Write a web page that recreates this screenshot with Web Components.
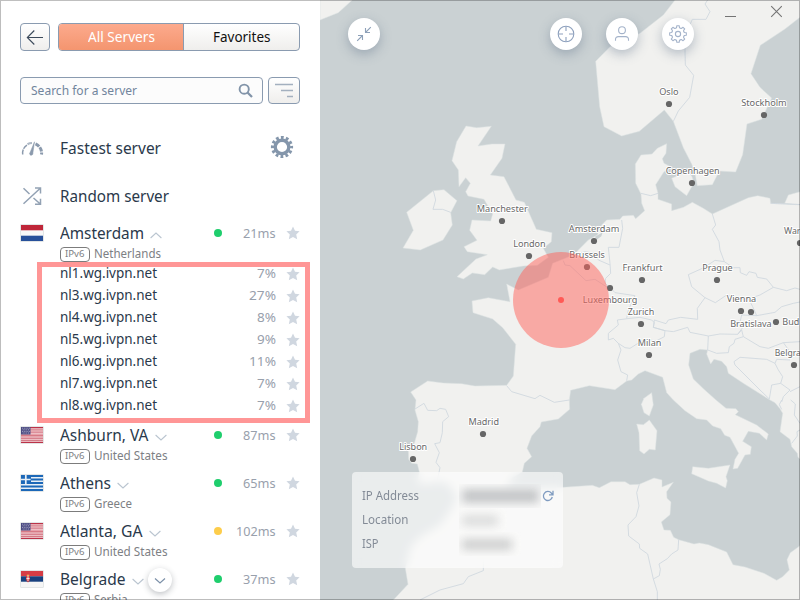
<!DOCTYPE html>
<html lang="en">
<head>
<meta charset="utf-8">
<title>IVPN servers</title>
<style>
html,body{margin:0;padding:0}
body{width:800px;height:600px;overflow:hidden;background:#fff;font-family:"Noto Sans","Open Sans",sans-serif;color:#2a394b}
</style>
</head>
<body>
<vpn-window></vpn-window>
<script>
class Base extends HTMLElement{
  connectedCallback(){
    if(this.shadowRoot)return;
    this.attachShadow({mode:'open'}).innerHTML=this.render();
    this.ready&&this.ready();
  }
}

/* Text run condensed or widened to a given width */
class FitText extends Base{
  render(){return `<style>:host{display:inline-block;white-space:nowrap;flex:none;width:${this.getAttribute('w')}px}
    span{display:inline-block;transform-origin:0 50%}</style><span><slot></slot></span>`}
  ready(){
    const s=this.shadowRoot.querySelector('span'),n=s.getBoundingClientRect().width;
    if(n)s.style.transform=`scaleX(${this.getAttribute('w')/n})`;
  }
}

class FavStar extends Base{
  render(){return `<style>:host{display:block;width:14px;height:14px}svg{display:block}</style>
  <svg width="14" height="14" viewBox="0 0 14 14"><path fill="#d0d7e0" d="M7 .4 9 4.700 13.600 5.200 10.200 8.400 11.200 13.200 7 10.900 2.800 13.200 3.800 8.400 .4 5.200 5 4.700Z"/></svg>`}
}

const US=`<rect width="22" height="16" fill="#e7a2ab"/>
  <path d="M0 .6H22M0 15.4H22" stroke="#bb3349" stroke-width="1.2"/>
  <path d="M9 2.9H22M9 5.1H22M0 8.9H22M0 11.2H22M0 13.3H22" stroke="#c44f61" stroke-width=".8"/>
  <path d="M9 1.9H22M9 4H22M9 6.2H22M0 10H22M0 12.3H22M0 14.3H22" stroke="#f6dfe1" stroke-width=".7"/>
  <rect width="9.5" height="7.5" fill="#4b4b82"/>
  <path d="M1 1.2H9M1.7 2.8H9M1 4.4H9M1.7 6H9" stroke="#c3c2d8" stroke-width=".8" stroke-dasharray=".9 .9"/>`;
const FLAGS={
  nl:`<rect width="22" height="16" fill="#f8f8f8"/><rect width="22" height="5.3" fill="#bf2639"/><rect y="10.7" width="22" height="5.3" fill="#27509a"/>`,
  us:US,
  gr:`<rect width="22" height="16" fill="#1c68b8"/><path d="M10 2.7H22M10 6.2H22M0 9.8H22M0 13.3H22" stroke="#e8eff6" stroke-width="1.6"/><rect width="9.6" height="9" fill="#1c68b8"/><path d="M4.8 0V9M0 4.5H9.6" stroke="#e8eff6" stroke-width="1.7"/>`,
  rs:`<rect width="22" height="16" fill="#f5f5f5"/><rect width="22" height="5.3" fill="#d63c45"/><rect y="5.3" width="22" height="5.4" fill="#18407e"/><path d="M5 5H9V9L7 11.500 5 9Z" fill="#cf3a43"/><path d="M7 5V10M5.500 7.500H8.500" stroke="#f4e4e0" stroke-width="1"/><path d="M5.800 3.700H8.200V5H5.800Z" fill="#e9b95b"/>`
};
class FlagIcon extends Base{
  render(){return `<style>:host{display:block;width:22px;height:16px;border:1px solid #e3e6e6;border-radius:1px}svg{display:block}</style>
  <svg width="22" height="16">${FLAGS[this.getAttribute('code')]}</svg>`}
}

class ServerRow extends Base{
  render(){
    const a=n=>this.getAttribute(n);
    return `<style>
    :host{display:block;height:48px}
    :host([open]){height:41px}
    .a{display:grid;grid-template-columns:40px 1fr 26px 54px 24px;height:24px;align-items:center}
    .city{display:flex;align-items:center;font-size:15.900px;line-height:24px}
    .city svg{margin:4px 0 0 6px}
    .dot{width:8px;height:8px;border-radius:50%;background:${a('dot')||'#1fce6d'};justify-self:end}
    .ms{justify-self:end;font-size:13px;line-height:24px;color:#98a0ac;display:flex;margin-right:.5px}
    fav-star{justify-self:end}
    .b{display:flex;align-items:center;height:18px;margin-left:40px;gap:3.500px;font-size:12.200px;color:#7d8084;line-height:18px}
    .v6{box-sizing:border-box;width:30px;height:15px;border:1px solid #7c7c7c;border-radius:4px;display:flex;justify-content:center;align-items:center;font-size:9.300px;line-height:12px}
    </style>
    <div class="a"><flag-icon code="${a('flag')}"></flag-icon>
      <div class="city"><fit-text w="${a('cw')}">${a('city')}</fit-text><svg width="12" height="7" fill="none" stroke="#bac5d0" stroke-width="1.1"><path d="${this.hasAttribute('open')?'M.6 6 6 1 11.400 6':'M.6 1 6 6 11.400 1'}"/></svg></div>
      <i class="dot"></i><div class="ms"><fit-text w="${a('mw')}">${a('ms')}</fit-text></div><fav-star></fav-star></div>
    <div class="b"><span class="v6"><fit-text w="19.500">IPv6</fit-text></span><fit-text w="${a('nw')}">${a('country')}</fit-text></div>`}
}

class HostRow extends Base{
  render(){return `<style>:host{display:grid;grid-template-columns:1fr 60px 24px;height:22px;padding-left:40px;align-items:center;font-size:13.700px;line-height:22px}
    .p{justify-self:end;color:#98a0ac;font-size:13px;display:flex;margin-right:.5px}fav-star{justify-self:end;margin-top:2px}</style>
    <fit-text w="97"><slot></slot></fit-text><div class="p"><fit-text w="${this.getAttribute('w')}">${this.getAttribute('load')}</fit-text></div><fav-star></fav-star>`}
}

class QuickRow extends Base{
  render(){return `<style>:host{display:grid;grid-template-columns:40px 1fr 32px;height:48px;align-items:center;font-size:15.900px}
    ::slotted(svg){display:block}</style><slot name="icon"></slot><fit-text w="${this.getAttribute('w')}">${this.getAttribute('label')}</fit-text><slot name="end"></slot>`}
}

class ServerPanel extends Base{
  render(){return `<style>
  :host{display:block;position:relative;width:320px;height:600px;box-sizing:border-box;padding:23px 20px 0;background:#fff;overflow:hidden}
  .bar{display:flex}
  .btn{box-sizing:border-box;border:1px solid #8a9bb0;border-radius:4px;background:linear-gradient(#fff,#efeeec);display:flex;align-items:center;justify-content:center}
  .back{width:30px;height:28px;margin-right:8px}
  .seg{width:242px;height:28px;padding:0;overflow:hidden;font-size:13.800px;line-height:26px;color:#111;align-items:stretch}
  .seg div{flex:1;text-align:center}
  .seg .on{flex:0 0 124px;color:#fff;border-right:1px solid #8a9bb0;background:linear-gradient(#fcaa8d,#f4956f)}
  .search{box-sizing:border-box;width:243px;height:27px;border:1px solid #8a9bb0;border-radius:4px;background:#fcfcfc;padding:0 9px 0 10px;display:flex;align-items:center;justify-content:space-between;font-size:12.700px;line-height:25px;color:#71859c;margin-right:5px}
  .filter{width:32px;height:27px}
  .mark{position:absolute;left:37px;top:262px;width:273px;height:161px;box-sizing:border-box;border:5px solid #ff9696}
  .more{position:absolute;left:148px;top:568px;width:24px;height:24px;border-radius:50%;background:#fff;box-shadow:0 2px 6px rgba(40,50,60,.3)}
  .more svg{display:block}
  .hosts{height:154px;margin-bottom:7px}
  </style>
  <div class="bar"><div class="btn back"><svg width="18" height="16" fill="none" stroke="#3c4a5b" stroke-width="1.100"><path d="M17 8.500H1.500M8.300 1.500 1.300 8.500 8.300 15.500"/></svg></div>
  <div class="btn seg"><div class="on"><fit-text w="67">All Servers</fit-text></div><div><fit-text w="57.500">Favorites</fit-text></div></div></div>
  <div class="bar" style="margin:26px 0 20px"><div class="search"><fit-text w="106">Search for a server</fit-text><svg width="15" height="15" fill="none" stroke="#8294a9" stroke-width="1.900"><circle cx="6.200" cy="6.200" r="4.600"/><path d="M9.500 9.500 14 14" stroke-width="2.300"/></svg></div>
  <div class="btn filter"><svg width="18" height="15" stroke="#a3b0bf" stroke-width="1.500"><path d="M0 1.500H18M6 7.500H18M12 13.500H18"/></svg></div></div>
  <quick-row label="Fastest server" w="101"><svg slot="icon" width="24" height="16" fill="none" stroke="#8b9aad" ><path d="M2.700 14.500A9.500 9.500 0 0 1 7 5" stroke-width="1.500" stroke-dasharray="5 .8"/><path d="M7.500 4.200A9.800 9.800 0 0 1 12 3" stroke-width="2.200" stroke="#aeb9c6"/><path d="M15.500 3.800A10 10 0 0 1 21.500 14.500" stroke-width="3" stroke-dasharray="4.500 1"/><path d="M14.500 1.800 12.900 13A1.700 1.700 0 1 1 10.200 12.200Z" fill="#8b9aad" stroke-width=".5"/></svg>
   <svg slot="end" width="24" height="24" viewBox="-12 -12 24 24" style="margin-top:-3px;margin-left:2px"><g fill="none" stroke="#8496ab"><circle r="6.800" stroke-width="3.400"/><circle r="9.500" stroke-width="3.200" stroke-dasharray="2.774 2.200" stroke-dashoffset="1.387"/></g></svg></quick-row>
  <quick-row label="Random server" w="109"><svg slot="icon" width="24" height="20" fill="none" stroke="#93a2b4" stroke-width="1.500"><path d="M3.500 17.800 20 2.500M3.500 2.200 9.500 8M13.500 12 20 17.800M15 2H20.500V7.500M20.500 12.700V18.200H15"/></svg></quick-row>
  <div style="height:2px;margin-top:-1px"></div>
  <server-row open flag="nl" city="Amsterdam" cw="84" ms="21ms" mw="32.500" country="Netherlands" nw="67"></server-row>
  <div class="hosts">
  <host-row load="7%" w="19">nl1.wg.ivpn.net</host-row>
  <host-row load="27%" w="27">nl3.wg.ivpn.net</host-row>
  <host-row load="8%" w="19">nl4.wg.ivpn.net</host-row>
  <host-row load="9%" w="19">nl5.wg.ivpn.net</host-row>
  <host-row load="11%" w="27">nl6.wg.ivpn.net</host-row>
  <host-row load="7%" w="19">nl7.wg.ivpn.net</host-row>
  <host-row load="7%" w="19">nl8.wg.ivpn.net</host-row></div>
  <server-row flag="us" city="Ashburn, VA" cw="88.500" ms="87ms" mw="32.500" country="United States" nw="73.500"></server-row>
  <server-row flag="gr" city="Athens" cw="51" ms="65ms" mw="32.500" country="Greece" nw="38"></server-row>
  <server-row flag="us" city="Atlanta, GA" cw="82.500" ms="102ms" mw="39.500" dot="#fdcd4b" country="United States" nw="73.500"></server-row>
  <server-row flag="rs" city="Belgrade" cw="65.500" ms="37ms" mw="32.500" country="Serbia" nw="33.500"></server-row>
  <div class="mark"></div>
  <div class="more"><svg width="24" height="24" fill="none" stroke="#7c90a8" stroke-width="1.200"><path d="M7 10.500 12 15 17 10.500"/></svg></div>`}
}

/* Map geometry, in thirds of a pixel; each run of points starts at its own origin */
const A=[0,0],B=[720,0],C=[0,600],D=[720,600],E=[0,1200],F=[720,1200],G=[900,480],H=[360,900],I=[240,420];
const line=(...runs)=>runs.map(([o,s])=>s.split(' ').map(p=>{const [x,y]=p.split(',').map(Number);return (x+o[0])+','+(y+o[1])}).join(' ')).join(' ');
const LAND=[
 [[B,'345,0 310,45 240,100 150,140 107,184 119,320 132,380 185,408 238,394 313,330 340,364 370,443 395,492 405,520 412,557 457,554 478,513 527,516 548,464 561,372 605,358 635,294 600,262 573,221 601,136 675,87 720,52 720,0']],
 [[A,'0,0 97,0 55,38 0,60']],
 [[A,'438,378 470,383 514,379 474,438 516,432 555,432 546,475 511,525 552,530'],[I,'348,180 373,187 409,268 456,278 454,305 430,325 445,352 412,376 370,378 298,390 278,381 254,404 217,399 190,417 171,410 228,357 262,344 202,335 192,320 231,301 209,271 216,240 272,243 278,222 252,178 204,168 197,155 211,130 197,113 177,140 175,90 156,62 170,5']],
 [[I,'20,217 100,152 132,149 171,182 152,218 157,255 129,300 61,330 9,324 40,271']],
 [[G,'140,-49 112,-35 96,-18 63,-15 46,12 47,70 63,102 65,130 74,152 47,176 40,166 8,168 0,178'],[I,'620,240 605,255 592,285 565,300 545,320 520,345 458,370 445,412 355,450 320,432'],
  [C,'570,305 505,293 456,303 459,338 518,357 548,383 587,433 580,528 560,556 465,558 425,551 370,549 323,543 272,576 288,600'],
  [E,'285,30 295,65 293,95 283,130 265,150 266,178 275,190 292,192 298,216 292,252 380,247 408,285 460,340 600,330 560,265 575,235 607,216'],
  [H,'253,490 275,470 261,445 275,408 300,380 304,366 355,357 389,328 388,300 392,271 448,257 525,269 560,243 575,240 595,222 615,212 668,232 680,278'],
  [F,'340,0 375,32 410,56 440,60 458,78 482,86 494,106 510,112 536,160 525,178 519,207 533,205 555,165 571,163 574,140 548,124 565,94 598,100 620,120 625,102 590,75 526,44 535,35 528,26 498,25 468,0'],
  [D,'432,568 400,537 386,495 390,460 420,448 443,450 440,462 452,492 462,478 485,484 500,500 505,520 550,550 630,600'],
  [F,'645,8 660,26 668,40 660,95 690,118 695,140 712,160 714,172 730,185'],
  [G,'550,135 452,130 450,115 413,107 385,113 277,162 250,145 217,127 190,142 155,152 155,132 114,118 114,100 107,74 132,35 155,22 132,10 127,-4 138,-20']],
 [[G,'494,130 505,105 540,95 550,135']],
 [[G,'155,55 205,34 216,50 222,68 200,107 165,80']],
 [[F,'398,200 445,205 510,195 498,230 502,242 497,264 470,250 445,243 395,221']],
 [[F,'230,72 250,74 268,60 291,92 286,150 268,148 252,162 239,152 237,98']],
 [[H,'635,278 640,315 628,348 612,338 604,313 612,295']],
 [[E,'220,600 264,553 256,505 272,440 300,410 360,375 392,330 412,290 540,268'],[F,'10,262 97,256 118,263 153,245 195,245 210,254 238,253 282,234 306,240 306,261 340,247 320,275 321,295 333,306 330,344 304,366 312,390 331,391 341,412 356,419 402,432 418,429 445,434 500,456 519,494 555,501 612,520 650,541 668,530 688,510 681,479 691,458 720,437 720,600']]
];
const BORDERS=[
 [I,'100,152 107,180 99,208 128,208 152,217'],
 [B,'443,0 435,12 450,35 438,58 397,58 374,110 376,195 401,226 389,292 355,333 340,364'],
 [G,'63,100 92,107 114,100'],[G,'452,130 550,134'],
 [D,'457,42 467,75 457,88 477,125 480,150 493,185'],
 [D,'493,185 465,181 450,191 427,205 385,224 395,260 435,293 466,308 500,285 540,298 585,290 600,285 640,262 620,237 592,232 588,220 567,215 560,226 541,218 540,203 520,203 493,185'],
 [D,'435,293 412,325 413,358 362,352 325,360 318,371 283,360 280,382 315,392'],
 [D,'640,262 680,272 705,264 720,268'],[D,'565,295 578,320 590,347 645,337 665,320 700,310 720,306'],
 [D,'590,347 545,345 538,375 550,380 533,403'],
 [D,'315,392 340,395 383,382 390,397 445,408 480,402 533,403 545,390 550,410 600,440 625,445 670,428 720,425'],
 [D,'445,408 443,450 470,460 505,458 508,440 522,430 525,418 550,410'],
 [D,'540,472 522,485 525,495 600,570 628,597 635,555 662,550 668,530 655,510 645,490 620,478 540,472'],
 [D,'645,490 650,478 690,480'],[D,'662,550 690,570 670,590 665,606'],[D,'690,575 720,560'],[D,'670,428 690,455'],
 [D,'185,60 188,85 177,142 145,142 150,190 152,220 137,235 135,250 150,262 165,278 225,287 205,330 200,355'],
 [D,'45,165 75,155 105,160 115,180 150,195'],[D,'10,182 15,195 30,197 78,242 105,238 145,264'],
 [D,'145,420 145,400 175,375 172,360 210,355 240,352 275,360 283,368 280,382 315,392 313,410 290,422 250,420 210,445 195,443 175,430 160,415 145,420'],
 [D,'175,430 183,450 173,480 183,515 203,525 200,542'],
 [H,'200,257 215,275 285,296 300,286 343,307 388,300'],
 [E,'285,27 312,10 323,31 350,32 360,25 377,28 386,50 368,65 367,98 360,128 344,131 358,158 348,187 360,203 350,250'],
 [E,'300,600 360,570 430,551 445,530 490,512 490,470'],
 [F,'238,253 230,278 237,318 228,350 204,375 206,408 238,432 239,445 263,462 280,537 292,575 292,600'],
 [F,'356,419 354,450 335,462 322,476 297,492 301,508 298,527 280,537'],
 [F,'665,0 658,14 665,28'],[F,'692,0 706,12 703,45 720,70'],[F,'695,130 712,108 711,95 720,90']
];
/* name, label left, label width, baseline, dot x, dot y */
const CITIES=[['Oslo',659.2,19.500,95,669,104],['Stockholm',741.2,45.500,106,764,115],['Copenhagen',665.7,54,174,692,183],['Manchester',476.7,51,212,502,221],['London',513.2,32.500,247,529,256],['Amsterdam',568.8,50.500,232,594,241],['Brussels',569.3,35.500,258,587,267],['Frankfurt',622.5,40,271,642,280],['Luxembourg',582.8,54.500,303,610,288],['Prague',702.2,30.500,271,717,280],['War',784,16.500,234,800,243],['Vienna',726.7,29.500,302,741,311],['Bratislava',730.2,41.500,327,751,312],['Bud',782.3,17,325,776,322],['Belgra',774.8,26,356,794,365],['Zurich',627.7,26.500,315,641,324],['Milan',637.8,23.500,346,649,355],['Madrid',468.5,30.500,425,483,434],['Lisbon',399.2,28,450,413,459]];

class MapView extends Base{
  render(){return `<style>:host{display:block;width:480px;height:600px;overflow:hidden;background:#cad1d3}svg{display:block}
   text{font-size:9.700px;fill:#686868;stroke:#fff;stroke-width:2px;stroke-linejoin:round;paint-order:stroke}</style>
  <svg width="480" height="600" viewBox="320 0 480 600">
  <g transform="translate(320 0) scale(.33333)"><g fill="#f1f1ef" stroke="#dde2e3" stroke-width="1.500">${LAND.map(r=>`<polygon points="${line(...r)}"/>`).join('')}</g>
  <polygon fill="#cad1d3" points="${line([I,'585,290 608,277 604,289 590,299'])}"/>
  <g fill="none" stroke="#cfd8de" stroke-width="2.600" stroke-linejoin="round">${BORDERS.map(r=>`<polyline points="${line(r)}"/>`).join('')}</g></g>
  <g>${CITIES.map(([n,x,w,y,cx,cy])=>`<circle cx="${cx}" cy="${cy}" r="3.100" fill="#666"/><text x="${x}" y="${y}" textLength="${w}" lengthAdjust="spacingAndGlyphs">${n}</text>`).join('')}</g>
  <circle cx="561" cy="300" r="48" fill="#ff6159" fill-opacity=".5"/><circle cx="561" cy="300" r="3" fill="#ff5a56"/>
  </svg>`}
}

class RoundButton extends Base{
  render(){return `<style>:host{display:block;width:32px;height:32px;border-radius:50%;background:#fff;box-shadow:0 4px 12px rgba(80,100,125,.38)}
  ::slotted(svg){display:block}</style><slot></slot>`}
}

class InfoCard extends Base{
  render(){return `<style>:host{display:grid;grid-template-columns:97px 1fr;grid-auto-rows:24px;align-items:center;box-sizing:border-box;width:211px;height:96px;padding:12px 10px;border-radius:4px;background:rgba(255,255,255,.6);backdrop-filter:blur(5px);font-size:12.500px;line-height:24px;color:#838b96}
  .v{position:relative;height:24px;display:flex;align-items:center;overflow:hidden}
  .v i{display:block;height:11px;margin-left:3px;filter:blur(5px)}
  .r{display:flex;align-items:center}
  </style>
  <fit-text w="57">IP Address</fit-text><div class="r"><div class="v" style="width:82px;margin-left:-.5px"><i style="width:77px;height:14px;background:#c3c5c7"></i></div><svg width="12" height="12" style="margin-left:1.500px" fill="none" stroke="#7f9bc0" stroke-width="1.300"><path d="M10.300 7A4.500 4.500 0 1 1 9.300 3L11 4.800M11 .8V4.900H7"/></svg></div>
  <fit-text w="46.500">Location</fit-text><div class="v"><i style="width:36px;background:#dbdcdc"></i></div>
  <fit-text w="16.500">ISP</fit-text><div class="v"><i style="width:50px;background:#cdcece"></i></div>`}
}

class VpnWindow extends Base{
  render(){
    const gear=(()=>{let d='';for(let i=0;i<8;i++){const p=(r,deg)=>{const t=(i*45+deg-90)*Math.PI/180;return (16+r*Math.cos(t)).toFixed(2)+' '+(16+r*Math.sin(t)).toFixed(2)};d+=(i?'L':'M')+p(8.4,-8)+'L'+p(8.4,8)+'L'+p(6.6,13)+'Q'+p(5.9,22.5)+' '+p(6.6,32)}return d+'Z'})();
    return `<style>:host{display:flex;position:relative;width:800px;height:600px;overflow:hidden}
    .map{position:relative;width:480px;height:600px}
    round-button,info-card,.win{position:absolute}
    .edge{position:absolute;inset:0;border:1px solid rgba(0,0,0,.26);border-top-color:rgba(0,0,0,.25);pointer-events:none}
    </style>
    <server-panel></server-panel>
    <div class="map"><map-view></map-view>
    <round-button style="left:28px;top:18px"><svg width="32" height="32" fill="none" stroke="#8da0b8" stroke-width="1.100"><path d="M9.200 22.800 14.500 17.500M10 17.500H14.500V22M22.800 9.200 17.500 14.500M17.500 10V14.500H22"/></svg></round-button>
    <round-button style="left:230px;top:18px"><svg width="32" height="32" fill="none" stroke="#8da0bd" stroke-width="1.100"><circle cx="16" cy="16" r="7.800"/><path d="M16 8.500V13M16 19V23.500M8.500 16H13M19 16H23.500"/></svg></round-button>
    <round-button style="left:286px;top:18px"><svg width="32" height="32" fill="none" stroke="#a4b3ca" stroke-width="1.100"><circle cx="16" cy="12.200" r="3.400"/><path d="M9.500 22.800V21.500A2.800 2.800 0 0 1 12.300 18.600H19.700A2.800 2.800 0 0 1 22.500 21.500V22.800"/></svg></round-button>
    <round-button style="left:342px;top:18px"><svg width="32" height="32" fill="none" stroke="#a4b3ca" stroke-width="1.100" stroke-linejoin="round"><path d="${gear}"/><circle cx="16" cy="16" r="2.600"/></svg></round-button>
    <svg class="win" style="left:400px;top:0" width="70" height="24" fill="none" stroke="#747474" stroke-width="1.100"><path d="M5 16.500H16M51.200 6.200 61.800 16.800M61.800 6.200 51.200 16.800"/></svg>
    <info-card style="left:32px;top:472px"></info-card>
    </div><div class="edge"></div>`}
}
[['fit-text',FitText],['fav-star',FavStar],['flag-icon',FlagIcon],['server-row',ServerRow],['host-row',HostRow],['quick-row',QuickRow],['server-panel',ServerPanel],['map-view',MapView],['round-button',RoundButton],['info-card',InfoCard],['vpn-window',VpnWindow]].forEach(([n,c])=>customElements.define(n,c));
</script>
</body>
</html>
